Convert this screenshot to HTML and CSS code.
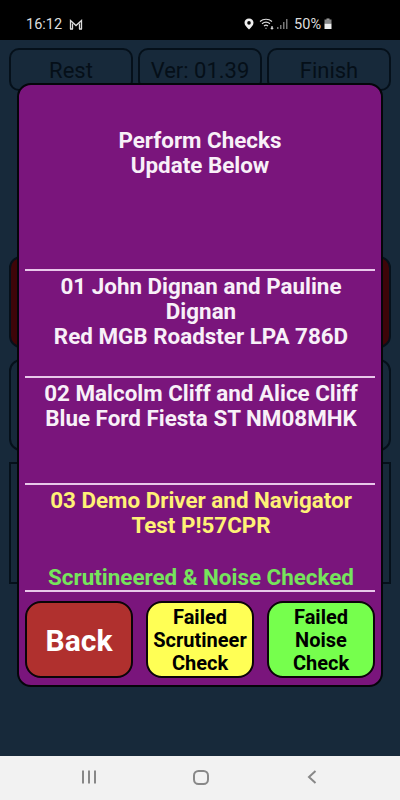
FILE: index.html
```html
<!DOCTYPE html>
<html lang="en">
<head>
  <meta charset="UTF-8">
  <meta name="viewport" content="width=device-width, initial-scale=1.0">
  <title>Perform Checks</title>
  <link rel="stylesheet" href="styles.css">
</head>
<body>
  <!-- Status bar -->
  <div class="status-bar">
    <div class="status-left">
      <span>16:12</span>
      <svg width="14" height="11" viewBox="0 0 14 11" fill="none" stroke="#ddd" stroke-width="1.3">
        <path d="M1.5 10V1.5L7 6.5L12.5 1.5V10"/>
        <path d="M3.5 10V4.5M10.5 10V4.5"/>
        <path d="M1 10H4M10 10H13"/>
      </svg>
    </div>
    <div class="status-right">
      <svg class="pin" width="10" height="12" viewBox="0 0 10 12">
        <path fill="#eee" fill-rule="evenodd" d="M5 0.5C2.3 0.5 0.5 2.4 0.5 4.8C0.5 7.4 3 9.6 5 11.5C7 9.6 9.5 7.4 9.5 4.8C9.5 2.4 7.7 0.5 5 0.5ZM5 3.1A1.8 1.8 0 1 1 5 6.7A1.8 1.8 0 1 1 5 3.1Z"/>
      </svg>
      <svg class="wifi" width="16" height="12" viewBox="0 0 16 12" fill="none" stroke="#ddd" stroke-width="1.2">
        <path d="M1 3.5C4.5 0.5 9.5 0.5 13 3.5"/>
        <path d="M3 5.8C5.5 3.8 8.5 3.8 11 5.8"/>
        <path d="M5 8C6.3 7 7.7 7 9 8"/>
        <path d="M7 10.8V9.8"/>
        <path d="M13 8V11M11.8 9.8L13 11L14.2 9.8"/>
      </svg>
      <svg class="signal" width="12" height="12" viewBox="0 0 12 12" fill="#777">
        <rect x="0" y="9" width="1.5" height="2"/>
        <rect x="3" y="7" width="1.5" height="4"/>
        <rect x="6" y="4" width="1.5" height="7"/>
        <rect x="9" y="1" width="1.5" height="10"/>
      </svg>
      <span class="battery-text">50%</span>
      <svg width="8" height="12" viewBox="0 0 8 12">
        <rect x="2.5" y="0.5" width="3" height="2" fill="#aaa"/>
        <rect x="0.5" y="1.5" width="7" height="4" fill="#888"/>
        <rect x="0.5" y="5.5" width="7" height="5.5" fill="#eee"/>
      </svg>
    </div>
  </div>

  <!-- App screen, dimmed behind the dialog -->
  <div class="app">
    <div class="top-row">
      <div class="top-btn">Rest</div>
      <div class="top-btn">Ver: 01.39</div>
      <div class="top-btn">Finish</div>
    </div>
    <div class="back-card back-red"></div>
    <div class="back-card"></div>
    <div class="back-list"></div>

    <!-- Checks dialog -->
    <div class="dialog">
      <div class="dialog-title">Perform Checks<br>Update Below</div>
      <div class="entry">01 John Dignan and Pauline Dignan<br>Red MGB Roadster LPA 786D</div>
      <div class="entry">02 Malcolm Cliff and Alice Cliff<br>Blue Ford Fiesta ST NM08MHK</div>
      <div class="entry entry-last">
        <div class="entry-yellow">03 Demo Driver and Navigator<br>Test P!57CPR</div>
        <div class="entry-green">Scrutineered &amp; Noise Checked</div>
      </div>
      <div class="dialog-buttons">
        <div class="btn btn-back">Back</div>
        <div class="btn btn-yellow">Failed Scrutineer Check</div>
        <div class="btn btn-green">Failed Noise Check</div>
      </div>
    </div>
  </div>

  <!-- Navigation bar -->
  <div class="nav-bar">
    <svg width="16" height="14" viewBox="0 0 16 14" fill="#888">
      <rect x="1" y="0.5" width="2" height="13"/>
      <rect x="7" y="0.5" width="2" height="13"/>
      <rect x="13" y="0.5" width="2" height="13"/>
    </svg>
    <svg class="home" width="16" height="15" viewBox="0 0 16 15" fill="none" stroke="#888" stroke-width="2">
      <rect x="1" y="1" width="14" height="13" rx="4.5"/>
    </svg>
    <svg width="10" height="14" viewBox="0 0 10 14" fill="none" stroke="#888" stroke-width="2">
      <path d="M8.5 1L2 7L8.5 13"/>
    </svg>
  </div>
</body>
</html>
```

FILE: styles.css
```css
/* General Styling */
body {
  margin: 0;
  width: 400px;
  height: 800px;
  display: flex;
  flex-direction: column;
  font-family: Roboto, "Liberation Sans", sans-serif;
  background: #17293a;
  overflow: hidden;
}

/* Status bar */
.status-bar {
  height: 40px;
  background: #000;
  color: #ddd;
  font-size: 14.5px;
  display: flex;
  justify-content: space-between;
  align-items: center;
  padding: 8px 68px 0 26px;
  box-sizing: border-box;
}

.status-left, .status-right {
  display: flex;
  align-items: center;
}

.status-left {
  gap: 7px;
}

.pin {
  margin-right: 5px;
}

.wifi {
  margin-right: 2px;
}

.signal {
  margin-right: 5px;
}

.battery-text {
  margin-right: 3px;
}

/* App behind the dialog */
.app {
  position: relative;
  flex: 1;
  padding: 8px 9px 0;
  box-sizing: border-box;
  background: #17293a;
}

.top-row {
  display: flex;
  gap: 5px;
}

.top-btn {
  flex: 1;
  height: 43px;
  box-sizing: border-box;
  border: 2px solid #05101a;
  border-radius: 10px;
  background: #17293a;
  color: #050f18;
  font-size: 22px;
  padding-top: 8px;
  text-align: center;
}

.back-card {
  height: 92px;
  margin-top: 11px;
  box-sizing: border-box;
  border: 2px solid #05101a;
  border-radius: 12px;
}

.back-red {
  margin-top: 165px;
  background: #3d0508;
}

.back-list {
  height: 122px;
  margin-top: 11px;
  box-sizing: border-box;
  border: 2px solid #05101a;
}

/* Checks dialog */
.dialog {
  position: absolute;
  top: 43px;
  left: 17px;
  width: 366px;
  height: 604px;
  box-sizing: border-box;
  background: #7a157c;
  border: 2px solid #05050a;
  border-radius: 14px;
  padding: 0 6px;
  display: flex;
  flex-direction: column;
  color: #f8f0f8;
  font-size: 22.4px;
  font-weight: 700;
  line-height: 25px;
  text-align: center;
}

.dialog-title {
  height: 184px;
  padding-top: 43px;
  box-sizing: border-box;
}

.entry {
  height: 107px;
  border-top: 2px solid #e8c8ea;
  box-sizing: border-box;
  padding: 3px 4px 0 6px;
}

.entry-last {
  height: 109px;
  display: flex;
  flex-direction: column;
  justify-content: space-between;
  border-bottom: 2px solid #e8c8ea;
  padding-bottom: 0;
}

.entry-yellow {
  color: #fff176;
}

.entry-green {
  color: #76e45c;
}

.dialog-buttons {
  display: flex;
  justify-content: space-between;
  margin-top: 9px;
}

.btn {
  width: 108px;
  height: 77px;
  box-sizing: border-box;
  border: 2px solid #0a0508;
  border-radius: 16px;
  color: #000;
  font-size: 20px;
  line-height: 23px;
  padding-top: 2px;
  display: flex;
  align-items: center;
  justify-content: center;
}

.btn-back {
  background: #b0302e;
  color: #fff;
  font-size: 30px;
}

.btn-yellow {
  background: #ffff55;
}

.btn-green {
  background: #76ff4d;
}

/* Navigation bar */
.nav-bar {
  height: 44px;
  background: #f2f2f2;
  display: flex;
  align-items: center;
  justify-content: space-between;
  padding: 0 83px 2px 81px;
  box-sizing: border-box;
}

.home {
  margin-right: 3px;
}
```
